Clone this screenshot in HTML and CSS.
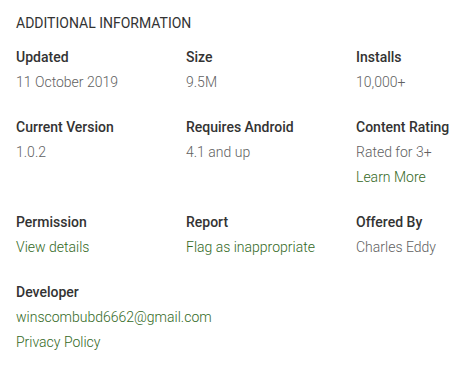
FILE: index.html
```html
<!DOCTYPE html>
<html lang="en">
<head>
  <meta charset="UTF-8">
  <title>Additional Information</title>
  <link rel="stylesheet" href="styles.css">
</head>
<body>
  <div class="info">
    <h3 class="info-title">ADDITIONAL INFORMATION</h3>
    <div class="info-grid">
      <div class="item">
        <div class="label">Updated</div>
        <div class="value">11 October 2019</div>
      </div>
      <div class="item">
        <div class="label">Size</div>
        <div class="value">9.5M</div>
      </div>
      <div class="item">
        <div class="label">Installs</div>
        <div class="value">10,000+</div>
      </div>

      <div class="item">
        <div class="label">Current Version</div>
        <div class="value">1.0.2</div>
      </div>
      <div class="item">
        <div class="label">Requires Android</div>
        <div class="value">4.1 and up</div>
      </div>
      <div class="item">
        <div class="label">Content Rating</div>
        <div class="value">Rated for 3+</div>
        <div class="value"><a href="#">Learn More</a></div>
      </div>

      <div class="item">
        <div class="label">Permission</div>
        <div class="value"><a href="#">View details</a></div>
      </div>
      <div class="item">
        <div class="label">Report</div>
        <div class="value"><a href="#">Flag as inappropriate</a></div>
      </div>
      <div class="item">
        <div class="label">Offered By</div>
        <div class="value">Charles Eddy</div>
      </div>

      <div class="item">
        <div class="label">Developer</div>
        <div class="value"><a href="#">winscombubd6662@gmail.com</a></div>
        <div class="value"><a href="#">Privacy Policy</a></div>
      </div>
    </div>
  </div>
</body>
</html>
```

FILE: styles.css
```css
body {
  margin: 0;
  background: #fff;
  font-family: Roboto, "Liberation Sans", Arial, sans-serif;
  font-size: 14px;
  color: #333;
}
.info {
  padding: 13px 16px;
}
.info-title {
  margin: 0 0 12px;
  font-size: 14px;
  font-weight: 400;
  line-height: 20px;
  color: #333;
}
.info-grid {
  display: grid;
  grid-template-columns: 170px 170px 1fr;
  row-gap: 20px;
}
.label {
  font-weight: 500;
  line-height: 25px;
  color: #333;
}
.value {
  font-weight: 300;
  line-height: 25px;
  color: #616161;
}
.value a {
  color: #33691e;
  text-decoration: none;
}
```
